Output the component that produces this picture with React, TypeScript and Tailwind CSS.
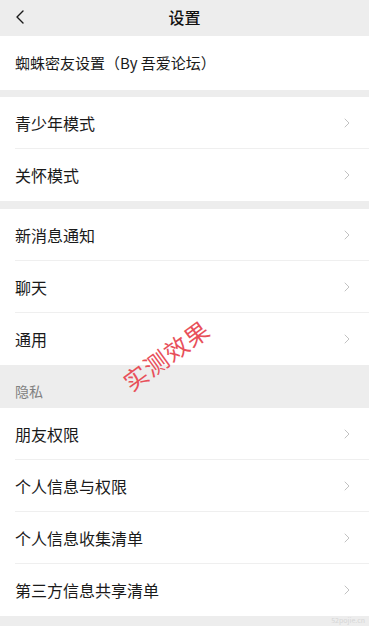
import { ChevronLeft, ChevronRight } from "lucide-react";

const font = { fontFamily: '"Noto Sans CJK SC", "Noto Sans", sans-serif' };

function Row({ label, last }: { label: string; last?: boolean }) {
  return (
    <div className="relative flex h-[52px] items-center justify-between bg-white pl-[15px] pr-[14px]">
      <span className="text-[16px] text-[#1a1a1a]">{label}</span>
      <ChevronRight className="h-[16px] w-[16px] text-[#bdbdbd]" strokeWidth={1.4} />
      {!last ? <div className="absolute bottom-0 left-[15px] right-0 h-px bg-[#efefef]" /> : null}
    </div>
  );
}

export default function App() {
  return (
    <div className="relative h-[626px] w-[369px] overflow-hidden bg-[#ededed]" style={font}>
      <header className="relative flex h-[36px] items-center justify-center pb-[3px]">
        <ChevronLeft className="absolute left-[8px] top-[5px] h-[24px] w-[24px] text-[#1a1a1a]" strokeWidth={1.4} />
        <h1 className="text-[16px] font-medium text-[#111]">设置</h1>
      </header>

      <div className="flex h-[54px] items-center bg-white pl-[15px]">
        <span className="text-[15px] text-[#1a1a1a]">蜘蛛密友设置（By 吾爱论坛）</span>
      </div>

      <div className="mt-[7px]">
        <Row label="青少年模式" />
        <Row label="关怀模式" last />
      </div>

      <div className="mt-[8px]">
        <Row label="新消息通知" />
        <Row label="聊天" />
        <Row label="通用" last />
      </div>

      <div className="flex h-[43px] items-end pb-[6px] pl-[15px]">
        <span className="text-[14px] text-[#808080]">隐私</span>
      </div>

      <div>
        <Row label="朋友权限" />
        <Row label="个人信息与权限" />
        <Row label="个人信息收集清单" />
        <Row label="第三方信息共享清单" last />
      </div>

      <div className="pointer-events-none absolute left-[116px] top-[337px] -rotate-[36deg] text-[24px] tracking-[1px] text-[#e8505a]">
        实测效果
      </div>
      <div className="pointer-events-none absolute bottom-[1px] right-[4px] text-[7px] leading-[10px] text-[#d6d6d6]">
        52pojie.cn
      </div>
    </div>
  );
}
